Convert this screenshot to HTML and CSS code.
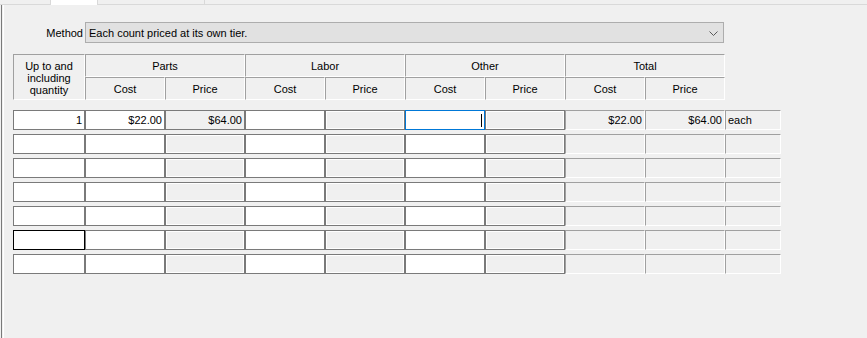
FILE: index.html
```html
<!DOCTYPE html>
<html lang="en">
<head>
    <meta charset="UTF-8">
    <title>Pricing Tiers</title>
    <link rel="stylesheet" href="styles.css">
</head>
<body>

<div class="tabs">
    <div class="tab"></div>
    <div class="tab tab-active"></div>
    <div class="tab tab-wide"></div>
    <div class="tab-rest"></div>
</div>

<div class="panel">
    <div class="panel-inner">
        <div class="method-row">
            <span class="method-label">Method</span>
            <div class="combo">
                <span class="combo-text">Each count priced at its own tier.</span>
                <svg class="chevron" width="9" height="5" viewBox="0 0 9 5">
                    <path d="M0.5 0.5 L4.5 4.5 L8.5 0.5" fill="none" stroke="#5a5a5a" stroke-width="1"/>
                </svg>
            </div>
        </div>

        <div class="head">
            <div class="hcell hcell-qty">Up to and<br>including<br>quantity</div>
            <div class="hcell hcell-group">Parts</div>
            <div class="hcell hcell-group">Labor</div>
            <div class="hcell hcell-group">Other</div>
            <div class="hcell hcell-group">Total</div>
            <div class="hcell">Cost</div>
            <div class="hcell">Price</div>
            <div class="hcell">Cost</div>
            <div class="hcell">Price</div>
            <div class="hcell">Cost</div>
            <div class="hcell">Price</div>
            <div class="hcell">Cost</div>
            <div class="hcell">Price</div>
        </div>

        <div class="rows">
            <!-- row 1 -->
            <div class="cell in num">1</div>
            <div class="cell in num">$22.00</div>
            <div class="cell ro ro-flat num">$64.00</div>
            <div class="cell in"></div>
            <div class="cell ro"></div>
            <div class="cell in focus"><span class="caret"></span></div>
            <div class="cell ro"></div>
            <div class="cell tot num">$22.00</div>
            <div class="cell tot num">$64.00</div>
            <div class="cell tot unit">each</div>
            <!-- row 2 -->
            <div class="cell in"></div><div class="cell in"></div><div class="cell ro"></div>
            <div class="cell in"></div><div class="cell ro"></div>
            <div class="cell in"></div><div class="cell ro"></div>
            <div class="cell tot"></div><div class="cell tot"></div><div class="cell tot"></div>
            <!-- row 3 -->
            <div class="cell in"></div><div class="cell in"></div><div class="cell ro"></div>
            <div class="cell in"></div><div class="cell ro"></div>
            <div class="cell in"></div><div class="cell ro"></div>
            <div class="cell tot"></div><div class="cell tot"></div><div class="cell tot"></div>
            <!-- row 4 -->
            <div class="cell in"></div><div class="cell in"></div><div class="cell ro"></div>
            <div class="cell in"></div><div class="cell ro"></div>
            <div class="cell in"></div><div class="cell ro"></div>
            <div class="cell tot"></div><div class="cell tot"></div><div class="cell tot"></div>
            <!-- row 5 -->
            <div class="cell in"></div><div class="cell in"></div><div class="cell ro"></div>
            <div class="cell in"></div><div class="cell ro"></div>
            <div class="cell in"></div><div class="cell ro"></div>
            <div class="cell tot"></div><div class="cell tot"></div><div class="cell tot"></div>
            <!-- row 6 -->
            <div class="cell in dark"></div><div class="cell in"></div><div class="cell ro"></div>
            <div class="cell in"></div><div class="cell ro"></div>
            <div class="cell in"></div><div class="cell ro"></div>
            <div class="cell tot"></div><div class="cell tot"></div><div class="cell tot"></div>
            <!-- row 7 -->
            <div class="cell in"></div><div class="cell in"></div><div class="cell ro"></div>
            <div class="cell in"></div><div class="cell ro"></div>
            <div class="cell in"></div><div class="cell ro"></div>
            <div class="cell tot"></div><div class="cell tot"></div><div class="cell tot"></div>
        </div>
    </div>
</div>

</body>
</html>
```

FILE: styles.css
```css
html, body {
    height: 100%;
}
body {
    margin: 0;
    background: #f0f0f0;
    font-family: "Liberation Sans", Arial, sans-serif;
    font-size: 11px;
    color: #000;
    display: flex;
    flex-direction: column;
}
.tabs {
    display: flex;
    height: 4px;
    border-bottom: 1px solid #d9d9d9;
}
.tab {
    width: 50px;
    border-right: 1px solid #d9d9d9;
}
.tab-active {
    width: 46px;
    background: #fff;
    margin-bottom: -1px;
}
.tab-wide {
    width: 106px;
}
.tab-rest {
    flex: 1;
}
.panel {
    flex: 1;
    margin-left: 1px;
    border-left: 1px solid #7a7a7a;
    padding-left: 1px;
    display: flex;
}
.panel-inner {
    flex: 1;
    border-left: 1px solid #fff;
    padding-left: 1px;
}
.method-row {
    display: flex;
    align-items: center;
    margin-top: 17px;
}
.method-label {
    width: 78px;
    text-align: right;
    margin-right: 2px;
}
.combo {
    width: 639px;
    height: 21px;
    box-sizing: border-box;
    border: 1px solid #adadad;
    background: #e1e1e1;
    display: flex;
    align-items: center;
    justify-content: space-between;
    padding: 0 5px 0 3px;
}
.chevron {
    display: block;
    margin-top: 1px;
}
.head {
    display: grid;
    grid-template-columns: 72px repeat(8, 80px);
    grid-template-rows: 23px 23px;
    margin: 11px 0 0 8px;
}
.hcell {
    box-sizing: border-box;
    border-left: 1px solid #a0a0a0;
    border-top: 1px solid #a0a0a0;
    border-right: 1px solid #fff;
    border-bottom: 1px solid #fff;
    display: flex;
    align-items: center;
    justify-content: center;
    text-align: center;
}
.hcell-qty {
    grid-row: span 2;
    line-height: 12px;
    padding-top: 1px;
}
.hcell-group {
    grid-column: span 2;
}
.rows {
    display: grid;
    grid-template-columns: 72px repeat(8, 80px) 56px;
    grid-auto-rows: 20px;
    row-gap: 4px;
    margin: 10px 0 0 8px;
}
.cell {
    box-sizing: border-box;
    display: flex;
    align-items: center;
    padding: 0 2px;
    line-height: 18px;
}
.in {
    background: #fff;
    border: 1px solid #7a7a7a;
}
.ro {
    background: #f0f0f0;
    border: 1px solid #7a7a7a;
    box-shadow: inset 0 0 0 1px #fff;
}
.ro-flat {
    box-shadow: none;
}
.tot {
    background: #f0f0f0;
    border-left: 1px solid #a0a0a0;
    border-top: 1px solid #a0a0a0;
    border-right: 1px solid #fff;
    border-bottom: 1px solid #fff;
}
.num {
    justify-content: flex-end;
}
.unit {
    padding-left: 2px;
}
.focus {
    border-color: #0078d7;
    justify-content: flex-end;
    padding-right: 2px;
}
.dark {
    border-color: #000;
}
.caret {
    width: 1px;
    height: 13px;
    background: #000;
}
```
